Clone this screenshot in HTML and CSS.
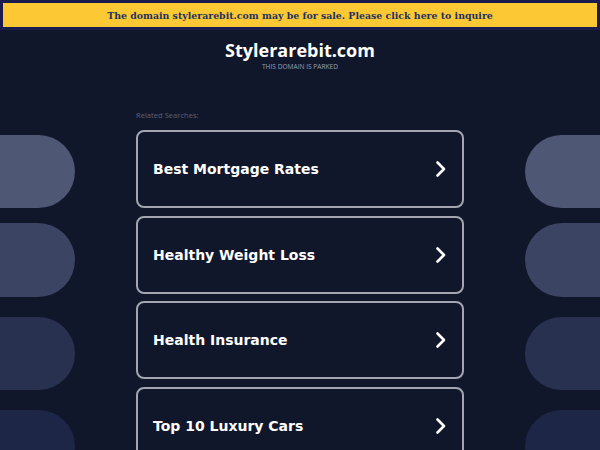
FILE: index.html
```html
<!DOCTYPE html>
<html>
<head>
<meta charset="utf-8">
<link rel="stylesheet" href="styles.css">
</head>
<body>
<div class="banner"><a class="banner-link" href="#">The domain stylerarebit.com may be for sale. Please click here to inquire</a></div>
<header class="head">
  <h1 class="title">Stylerarebit.com</h1>
  <div class="sub">THIS DOMAIN IS PARKED</div>
</header>
<main class="layout">
  <div class="pills left">
    <div class="pill c1"></div>
    <div class="pill c2"></div>
    <div class="pill c3"></div>
    <div class="pill c4"></div>
  </div>
  <section class="center">
    <div class="related">Related Searches:</div>
    <div class="cards">
      <a class="card" href="#"><span>Best Mortgage Rates</span><svg class="chev" viewBox="0 0 12 18" width="12" height="18"><path d="M2.5 2.5 L9 9 L2.5 15.5" fill="none" stroke="#fff" stroke-width="2.6" stroke-linecap="round" stroke-linejoin="round"/></svg></a>
      <a class="card" href="#"><span>Healthy Weight Loss</span><svg class="chev" viewBox="0 0 12 18" width="12" height="18"><path d="M2.5 2.5 L9 9 L2.5 15.5" fill="none" stroke="#fff" stroke-width="2.6" stroke-linecap="round" stroke-linejoin="round"/></svg></a>
      <a class="card" href="#"><span>Health Insurance</span><svg class="chev" viewBox="0 0 12 18" width="12" height="18"><path d="M2.5 2.5 L9 9 L2.5 15.5" fill="none" stroke="#fff" stroke-width="2.6" stroke-linecap="round" stroke-linejoin="round"/></svg></a>
      <a class="card" href="#"><span>Top 10 Luxury Cars</span><svg class="chev" viewBox="0 0 12 18" width="12" height="18"><path d="M2.5 2.5 L9 9 L2.5 15.5" fill="none" stroke="#fff" stroke-width="2.6" stroke-linecap="round" stroke-linejoin="round"/></svg></a>
    </div>
  </section>
  <div class="pills right">
    <div class="pill c1"></div>
    <div class="pill c2"></div>
    <div class="pill c3"></div>
    <div class="pill c4"></div>
  </div>
</main>
</body>
</html>
```
FILE: styles.css
```css
html, body {
  margin: 0;
  padding: 0;
  background: #11172b;
  height: 100%;
  overflow: hidden;
}
.banner {
  background: #fcc834;
  border: 3px solid #1b1c4e;
  height: 24px;
  display: flex;
  align-items: center;
  justify-content: center;
}
.banner-link {
  font-family: "DejaVu Serif", serif;
  font-weight: bold;
  font-size: 9.4px;
  color: #1f3160;
  text-decoration: none;
}
.head {
  text-align: center;
  padding-top: 8px;
}
.title {
  margin: 0;
  font-family: "Open Sans", sans-serif;
  font-weight: 700;
  font-size: 18px;
  line-height: 24px;
  color: #ffffff;
}
.sub {
  font-family: "Open Sans", sans-serif;
  font-size: 6.6px;
  line-height: 10px;
  color: #9aa0b3;
}
.layout {
  display: grid;
  grid-template-columns: 75px 328px 76px;
  column-gap: 61px;
  margin-top: 38px;
}
.pills {
  display: flex;
  flex-direction: column;
  padding-top: 25px;
}
.pill {
  height: 73px;
  flex: none;
}
.left .pill {
  border-radius: 0 37px 37px 0;
}
.right .pill {
  border-radius: 37px 0 0 37px;
}
.pill.c1 { background: #4e5774; margin-bottom: 15px; }
.pill.c2 { background: #3b4462; margin-bottom: 20px; height: 74px; }
.pill.c3 { background: #283150; margin-bottom: 20px; }
.pill.c4 { background: #1d2646; }
.related {
  font-family: "Open Sans", sans-serif;
  font-size: 7.6px;
  line-height: 10px;
  color: #5b6279;
  margin-bottom: 10px;
}
.cards {
  display: flex;
  flex-direction: column;
  gap: 7.5px;
}
.card {
  box-sizing: border-box;
  height: 78px;
  border: 2px solid #a3a6b1;
  border-radius: 8px;
  display: flex;
  align-items: center;
  justify-content: space-between;
  padding: 0 15px 0 15px;
  text-decoration: none;
  color: #ffffff;
  font-family: "DejaVu Sans", sans-serif;
  font-weight: bold;
  font-size: 14px;
}
.chev {
  display: block;
}
```
